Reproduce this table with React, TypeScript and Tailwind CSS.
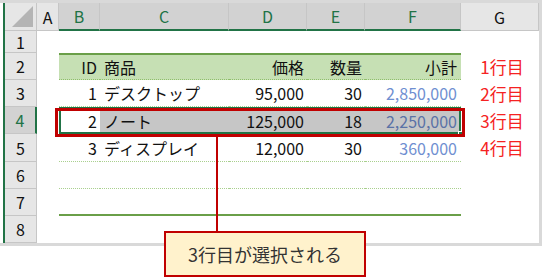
import type { ReactNode } from 'react';

const COLS = [
  { key: 'A', w: 'w-[22px]', sel: false },
  { key: 'B', w: 'w-[41px]', sel: true },
  { key: 'C', w: 'w-[129px]', sel: true },
  { key: 'D', w: 'w-[78px]', sel: true },
  { key: 'E', w: 'w-[58px]', sel: true },
  { key: 'F', w: 'w-[96px]', sel: true },
  { key: 'G', w: 'w-[78px]', sel: false },
];

type Row = {
  n: number;
  h: string;
  id?: string;
  name?: string;
  price?: string;
  qty?: string;
  total?: string;
  label?: string;
  line?: string;
};

const ROWS: Row[] = [
  { n: 1, h: 'h-[22px]' },
  { n: 2, h: 'h-[27px]', id: 'ID', name: '商品', price: '価格', qty: '数量', total: '小計', label: '1行目', line: 'head' },
  { n: 3, h: 'h-[27px]', id: '1', name: 'デスクトップ', price: '95,000', qty: '30', total: '2,850,000', label: '2行目', line: 'dot' },
  { n: 4, h: 'h-[27px]', id: '2', name: 'ノート', price: '125,000', qty: '18', total: '2,250,000', label: '3行目' },
  { n: 5, h: 'h-[28px]', id: '3', name: 'ディスプレイ', price: '12,000', qty: '30', total: '360,000', label: '4行目', line: 'dot' },
  { n: 6, h: 'h-[27px]', line: 'dot' },
  { n: 7, h: 'h-[27px]', line: 'end' },
  { n: 8, h: 'h-[27px]' },
];

function Cell({ w, className = '', children }: { w: string; className?: string; children?: ReactNode }) {
  return <div className={`${w} h-full shrink-0 flex items-center whitespace-nowrap ${className}`}>{children}</div>;
}

export default function App() {
  return (
    <div
      className="relative w-[543px] h-[280px] bg-white text-[16px] text-[#111]"
      style={{ fontFamily: '"Noto Sans CJK JP", "Noto Sans", sans-serif' }}
    >
      {/* sheet */}
      <div className="w-[542px] border-[3px] border-l-0 border-[#d9d9d9] pl-[3px]">
        <div className="border-l-2 border-[#217346]">
          {/* column headers */}
          <div className="flex h-[28px]">
            <div className="w-[32px] h-full shrink-0 bg-[#e6e6e6] border-r border-b border-[#c6c6c6] flex items-end justify-end p-[3px]">
              <svg width="21" height="21" viewBox="0 0 21 21">
                <polygon points="21,0 21,21 0,21" fill="#b4b4b4" />
              </svg>
            </div>
            {COLS.map((c) => (
              <div
                key={c.key}
                className={`${c.w} h-full shrink-0 flex items-center justify-center text-[16px] border-r border-[#c6c6c6] ${
                  c.sel ? 'bg-[#d2d2d2] text-[#217346] border-b-2 border-b-[#217346]' : 'bg-[#e6e6e6] text-[#111] border-b'
                }`}
              >
                {c.key}
              </div>
            ))}
          </div>

          {ROWS.map((r) => {
            const selected = r.n === 4;
            const tableLine =
              r.line === 'head'
                ? 'bg-[#c6e0b4] border-t-2 border-t-[#6a9f48] border-b [border-bottom-style:dotted] border-b-[#8fbf6a]'
                : r.line === 'dot'
                ? 'border-b [border-bottom-style:dotted] border-b-[#a9d08e]'
                : r.line === 'end'
                ? 'border-b-2 border-b-[#6a9f48]'
                : '';
            const fill = selected ? 'bg-[#c6c6c6]' : '';
            const blue = selected ? 'text-[#5a72a6]' : 'text-[#6f8fd1]';
            return (
              <div key={r.n} className={`relative flex ${r.h}`}>
                <div
                  className={`w-[32px] h-full shrink-0 flex items-center justify-center text-[16px] border-b border-[#c6c6c6] ${
                    selected ? 'bg-[#d2d2d2] text-[#217346] border-r-2 border-r-[#217346]' : 'bg-[#e6e6e6] border-r'
                  }`}
                >
                  {r.n}
                </div>
                <Cell w="w-[22px]" />
                <Cell w="w-[41px]" className={`justify-end pr-[3px] ${tableLine}`}>
                  {r.id}
                </Cell>
                <Cell w="w-[129px]" className={`pl-[4px] ${tableLine} ${fill}`}>
                  {r.name}
                </Cell>
                <Cell w="w-[78px]" className={`justify-end pr-[3px] ${tableLine} ${fill}`}>
                  {r.price}
                </Cell>
                <Cell w="w-[58px]" className={`justify-end pr-[3px] ${tableLine} ${fill}`}>
                  {r.qty}
                </Cell>
                <Cell w="w-[96px]" className={`justify-end pr-[4px] ${tableLine} ${fill} ${r.n === 2 ? '' : blue}`}>
                  {r.total}
                </Cell>
                <Cell w="w-[78px]" className="justify-center pl-[4px] text-[17px] text-[#f52222]">
                  {r.label}
                </Cell>
                {selected && (
                  <div className="absolute left-[54px] top-0 w-[402px] h-full border-2 border-[#217346]">
                    <div className="absolute -right-[4px] -bottom-[4px] w-[5px] h-[5px] bg-[#217346] border border-white" />
                  </div>
                )}
              </div>
            );
          })}
        </div>
      </div>

      {/* highlight box on row 4 */}
      <div className="absolute left-[55px] top-[108px] w-[410px] h-[29px] border-[3px] border-[#c00000]" />
      <div className="absolute left-[216px] top-[137px] w-[2px] h-[95px] bg-[#c00000]" />
      <div className="absolute left-[164px] top-[231px] w-[202px] h-[46px] border-2 border-[#c00000] bg-[#fff2cc] flex items-center justify-center text-[18px] text-[#333]">
        3行目が選択される
      </div>
    </div>
  );
}
